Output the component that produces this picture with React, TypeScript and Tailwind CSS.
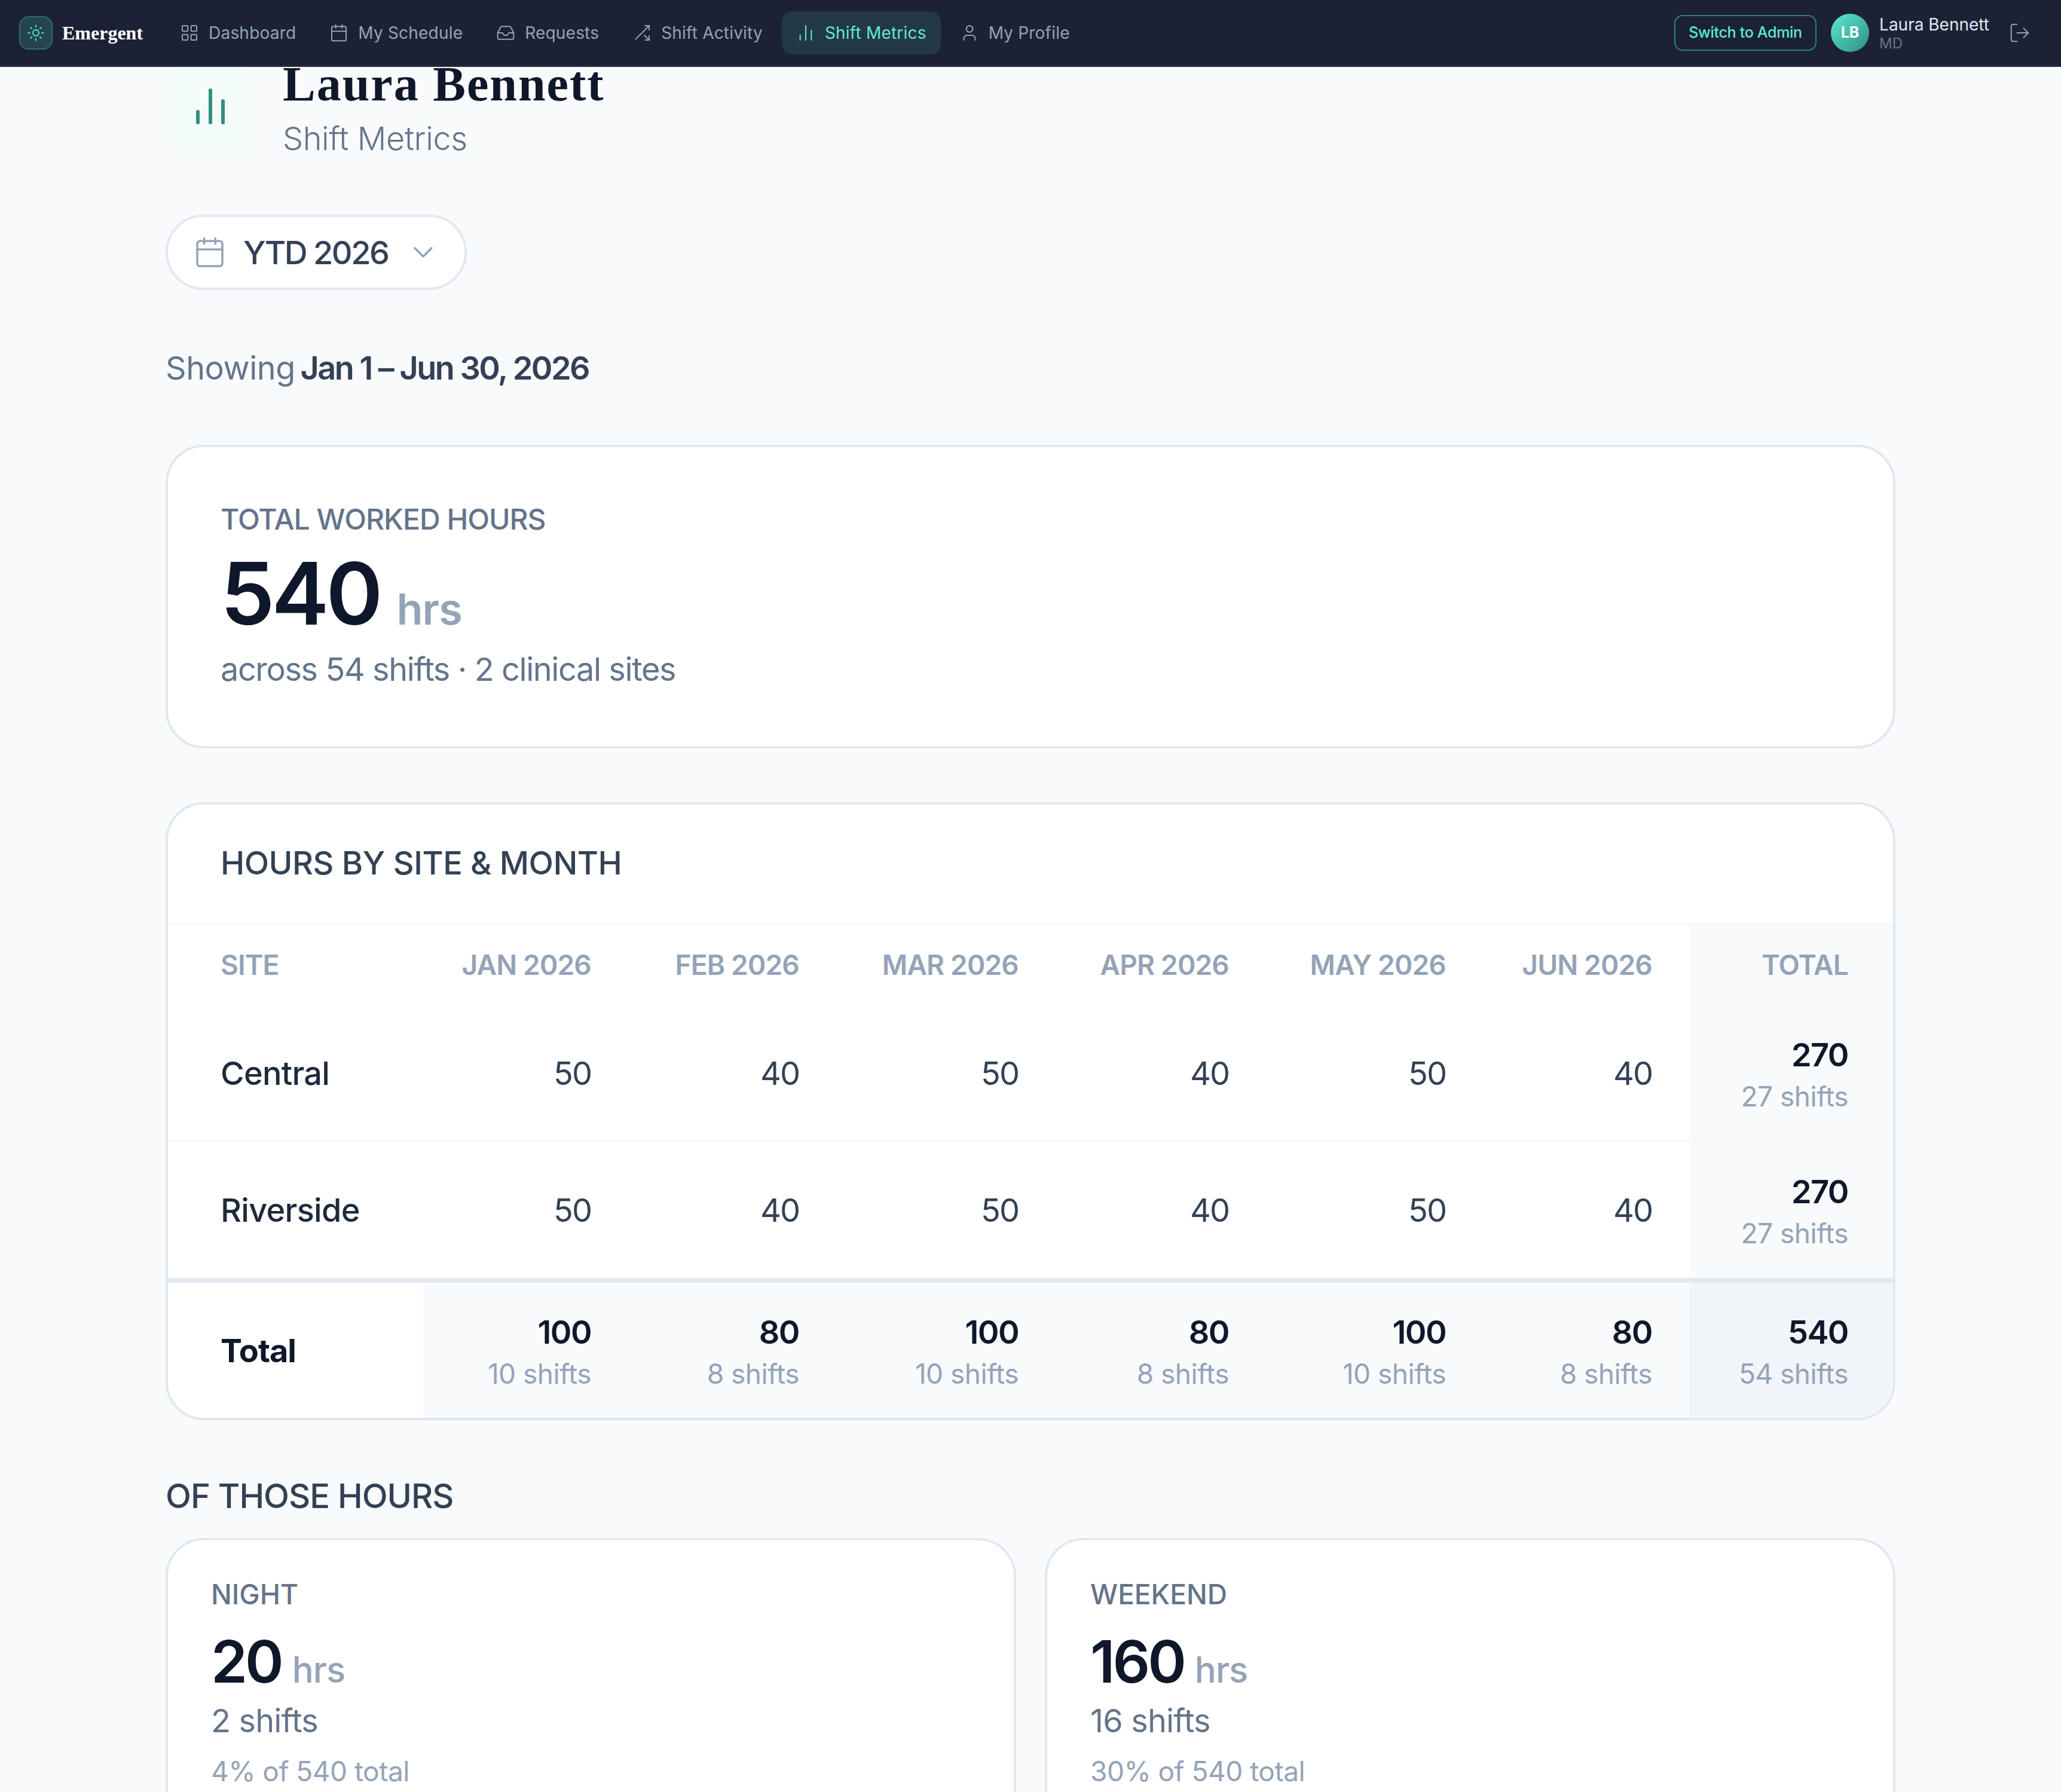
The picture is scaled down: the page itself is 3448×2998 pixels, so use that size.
import React from "react";
import { LayoutGrid, Calendar, Inbox, ChartNoAxesColumn, User, LogOut, ChevronDown, Sun } from "lucide-react";

// shuffle without the top-left stub
function ActivityIcon({ className }: { className?: string }) {
  return (
    <svg viewBox="0 0 24 24" fill="none" stroke="currentColor" strokeWidth={1.5} strokeLinecap="round" strokeLinejoin="round" className={className}>
      <path d="M16 3h5v5" />
      <path d="M4 20 21 3" />
      <path d="M21 16v5h-5" />
      <path d="m15 15 6 6" />
    </svg>
  );
}

const nav = [
  { label: "Dashboard", Icon: LayoutGrid },
  { label: "My Schedule", Icon: Calendar },
  { label: "Requests", Icon: Inbox },
  { label: "Shift Activity", Icon: ActivityIcon },
  { label: "Shift Metrics", Icon: ChartNoAxesColumn, active: true },
  { label: "My Profile", Icon: User },
];

const months = ["JAN 2026", "FEB 2026", "MAR 2026", "APR 2026", "MAY 2026", "JUN 2026"];
const siteHours = [50, 40, 50, 40, 50, 40];
const monthTotals = [
  { hrs: 100, shifts: "10 shifts" },
  { hrs: 80, shifts: "8 shifts" },
  { hrs: 100, shifts: "10 shifts" },
  { hrs: 80, shifts: "8 shifts" },
  { hrs: 100, shifts: "10 shifts" },
  { hrs: 80, shifts: "8 shifts" },
];

const gridCols = "grid grid-cols-[427px_344px_348px_367px_352px_363px_345px_343px]";

function StackedCell({ hrs, shifts, className }: { hrs: number; shifts: string; className: string }) {
  return (
    <div className={`flex flex-col items-end justify-center pt-[8px] ${className}`}>
      <span className="text-[54px] leading-[70px] font-semibold text-[#0f172a] tracking-[-1.5px]">{hrs}</span>
      <span className="text-[46px] leading-[68px] text-[#94a3b8] tracking-[-0.5px]">{shifts}</span>
    </div>
  );
}

function SiteRow({ name, border }: { name: string; border?: boolean }) {
  return (
    <div className={`${gridCols} h-[228px] ${border ? "border-b-2 border-[#f1f5f9]" : ""}`}>
      <div className="flex items-center pl-[88px] text-[54px] font-medium text-[#1e293b] tracking-[-0.7px]">{name}</div>
      {siteHours.map((v, i) => (
        <div key={i} className="flex items-center justify-end pr-[63px] text-[54px] text-[#334155] tracking-[-2px]">
          {v}
        </div>
      ))}
      <StackedCell hrs={270} shifts="27 shifts" className="bg-[#f8fafc] pr-[78px]" />
    </div>
  );
}

function SmallCard({ title, hours, shifts, pct }: { title: string; hours: number; shifts: string; pct: string }) {
  return (
    <div className="flex-1 bg-white border-4 border-[#e2e8f0] rounded-[64px] pt-[62px] pl-[72px] h-[500px]">
      <div className="text-[46px] leading-[56px] font-medium text-[#64748b]">{title}</div>
      <div className="mt-[35px] flex items-baseline gap-[18px] leading-[100px]">
        <span className="text-[98px] font-semibold text-[#0f172a] tracking-[-4px]">{hours}</span>
        <span className="text-[60px] font-medium text-[#94a3b8] tracking-[-1px]">hrs</span>
      </div>
      <div className="text-[54px] leading-[72px] text-[#64748b] tracking-[-0.8px]">{shifts}</div>
      <div className="mt-[18px] text-[46px] leading-[60px] text-[#94a3b8] tracking-[-0.5px]">{pct}</div>
    </div>
  );
}

export default function App() {
  return (
    <div className="w-[3448px] h-[2998px] overflow-hidden bg-[#f8fafc] font-['Inter',sans-serif]">
      {/* Top nav */}
      <header className="relative z-10 h-[112px] bg-[#1c2235] border-b-2 border-[#2a3249] flex items-center pl-[32px] pr-[50px]">
        <div className="w-[56px] h-[56px] rounded-[16px] bg-[#244550] border-2 border-[#2f6e6b] flex items-center justify-center">
          <Sun className="w-[30px] h-[30px] text-[#5eead4]" strokeWidth={1.5} />
        </div>
        <span className="ml-[16px] text-[32px] font-bold text-white font-['Liberation_Serif',serif]">Emergent</span>
        <nav className="ml-[38px] flex items-center gap-[8px]">
          {nav.map(({ label, Icon, active }) => (
            <div
              key={label}
              className={`h-[72px] px-[24px] rounded-[18px] flex items-center gap-[16px] text-[28px] tracking-[0.2px] ${
                active ? "bg-[#233845] text-[#5eead4]" : "text-[#94a3b8]"
              }`}
            >
              <Icon className="w-[32px] h-[32px]" strokeWidth={1.5} />
              <span>{label}</span>
            </div>
          ))}
        </nav>
        <div className="ml-auto flex items-center">
          <div className="h-[60px] w-[238px] rounded-[14px] border-2 border-[#2f7f7a] flex items-center justify-center text-[25px] font-medium text-[#5eead4] tracking-[-0.3px]">
            Switch to Admin
          </div>
          <div className="ml-[24px] w-[64px] h-[64px] rounded-full bg-gradient-to-br from-[#5eead4] to-[#2f8f80] flex items-center justify-center text-[25px] font-bold text-white">
            LB
          </div>
          <div className="ml-[17px] flex flex-col">
            <span className="text-[28px] leading-[36px] text-[#e2e8f0]">Laura Bennett</span>
            <span className="text-[24px] leading-[28px] text-[#64748b]">MD</span>
          </div>
          <LogOut className="ml-[32px] w-[38px] h-[38px] text-[#94a3b8]" strokeWidth={1.25} />
        </div>
      </header>

      <main className="relative -mt-[11px] px-[277px]">
        {/* Title */}
        <div className="flex items-center gap-[46px] h-[154px]">
          <div className="w-[150px] h-[154px] rounded-[36px] bg-[#f4fcfa] flex items-center justify-center">
            <ChartNoAxesColumn className="w-[72px] h-[72px] text-[#2f9080]" strokeWidth={2} />
          </div>
          <div className="flex flex-col mt-[6px]">
            <h1 className="text-[82px] leading-[84px] font-bold text-[#0f172a] font-['Liberation_Serif',serif] tracking-[2px]">Laura Bennett</h1>
            <div className="mt-[18px] text-[54px] leading-[62px] font-light text-[#64748b] tracking-[-0.4px]">Shift Metrics</div>
          </div>
        </div>

        {/* Period dropdown */}
        <div className="mt-[104px] w-[504px] h-[126px] bg-white border-4 border-[#e2e8f0] rounded-full flex items-center pl-[42px]">
          <Calendar className="w-[56px] h-[56px] text-[#94a3b8]" strokeWidth={1.5} />
          <span className="ml-[28px] text-[54px] font-medium text-[#334155] tracking-[-2.5px]">YTD 2026</span>
          <ChevronDown className="ml-[30px] w-[56px] h-[56px] text-[#94a3b8]" strokeWidth={1.5} />
        </div>

        <div className="mt-[99px] text-[54px] leading-[64px] text-[#64748b] tracking-[-0.5px]">
          Showing <span className="-ml-[6px] font-semibold text-[#334155] tracking-[-2.5px]">Jan 1 – Jun 30, 2026</span>
        </div>

        {/* Total hours */}
        <section className="mt-[96px] h-[508px] bg-white border-4 border-[#e2e8f0] rounded-[64px] pl-[88px] pt-[93px]">
          <div className="text-[48px] leading-[56px] font-medium text-[#64748b] tracking-[-1px]">TOTAL WORKED HOURS</div>
          <div className="mt-[31px] flex items-baseline gap-[28px] leading-[130px]">
            <span className="text-[144px] font-semibold text-[#0f172a] tracking-[-5px]">540</span>
            <span className="text-[72px] font-semibold text-[#94a3b8] tracking-[-1px]">hrs</span>
          </div>
          <div className="mt-[1px] text-[54px] leading-[70px] text-[#64748b] tracking-[-1.4px]">across 54 shifts · 2 clinical sites</div>
        </section>

        {/* Site and month table */}
        <section className="mt-[90px] bg-white border-4 border-[#e2e8f0] rounded-[64px] overflow-hidden">
          <div className="h-[200px] flex items-center pl-[88px] pb-[4px] border-b-2 border-[#f1f5f9] text-[54px] font-medium text-[#334155] tracking-[-0.5px]">
            HOURS BY SITE &amp; MONTH
          </div>
          <div className={`${gridCols} h-[136px] text-[46px] font-semibold text-[#94a3b8] tracking-[-0.8px]`}>
            <div className="flex items-center pl-[88px]">SITE</div>
            {months.map((m) => (
              <div key={m} className="flex items-center justify-end pr-[63px]">{m}</div>
            ))}
            <div className="flex items-center justify-end pr-[78px] bg-[#f8fafc]">TOTAL</div>
          </div>
          <SiteRow name="Central" border />
          <SiteRow name="Riverside" />
          <div className={`${gridCols} h-[234px] border-t-8 border-[#e2e8f0]`}>
            <div className="flex items-center pl-[88px] text-[54px] font-bold text-[#0f172a] tracking-[-1px]">Total</div>
            {monthTotals.map((t, i) => (
              <StackedCell key={i} hrs={t.hrs} shifts={t.shifts} className="bg-[#f8fafc] pr-[63px]" />
            ))}
            <StackedCell hrs={540} shifts="54 shifts" className="bg-[#f1f5f9] pr-[78px]" />
          </div>
        </section>

        {/* Breakdown */}
        <h2 className="mt-[95px] text-[56px] leading-[64px] font-medium text-[#334155] tracking-[-1px]">OF THOSE HOURS</h2>
        <div className="mt-[38px] flex gap-[48px]">
          <SmallCard title="NIGHT" hours={20} shifts="2 shifts" pct="4% of 540 total" />
          <SmallCard title="WEEKEND" hours={160} shifts="16 shifts" pct="30% of 540 total" />
        </div>
      </main>
    </div>
  );
}
